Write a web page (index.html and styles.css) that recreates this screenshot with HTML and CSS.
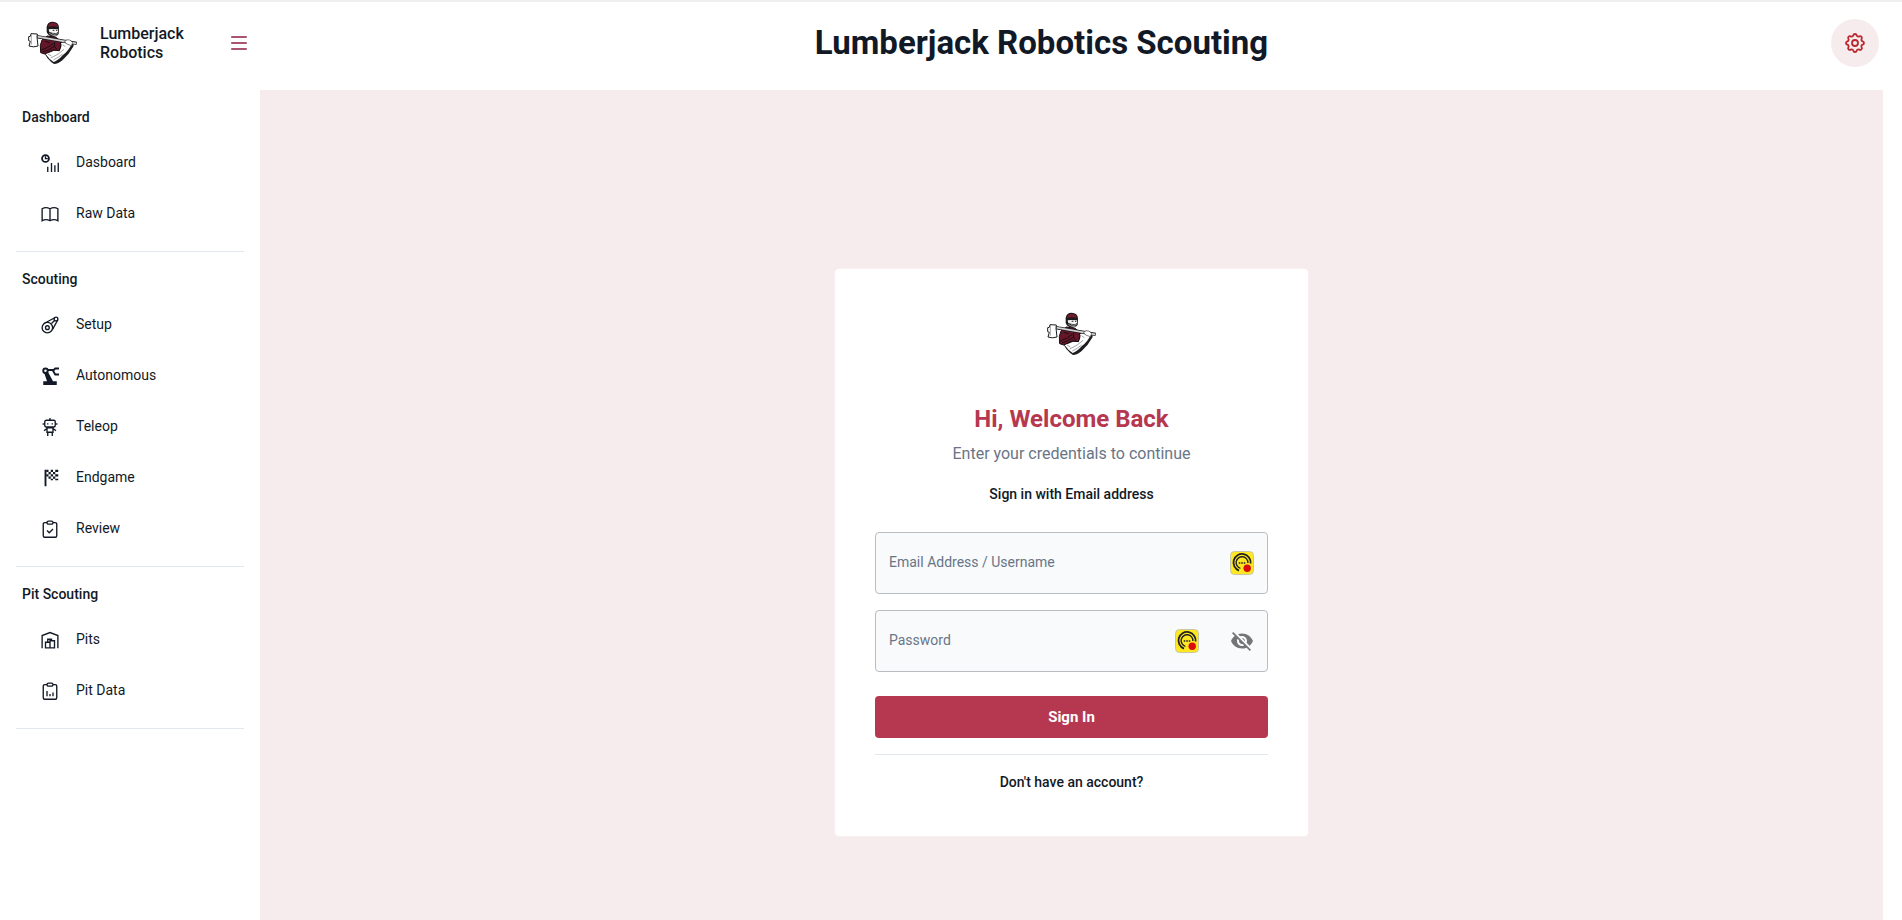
FILE: index.html
```html
<!DOCTYPE html>
<html lang="en">
<head>
    <meta charset="UTF-8">
    <meta name="viewport" content="width=device-width, initial-scale=1.0">
    <title>Lumberjack Robotics Scouting</title>
    <link rel="stylesheet" href="styles.css">
</head>
<body>
    <!-- Shared drawings -->
    <svg class="sprite" aria-hidden="true">
        <symbol id="logo" viewBox="0 0 150 130">
            <path d="M48 94 L58 110 Q68 122 78 128 Q90 128 104 116 Q124 98 137 74 L134 60 L118 55 L96 58 L80 80 Z" fill="#1d1d20"/>
            <path d="M52 97 Q66 94 78 88 L95 88 L100 76 L99 66 L108 60 L124 59 L131 68 Q122 88 104 102 Q90 118 77 122 Q64 114 52 97 Z" fill="#fff"/>
            <path d="M68 110 Q92 100 108 84 M76 116 Q92 108 104 98 M60 98 L70 104 M104 70 L112 76" fill="none" stroke="#77777a" stroke-width="2"/>
            <path d="M58 44 L42 56 L37 72 L38 94 L50 98 L76 86 L94 88 L99 70 L94 56 L84 48 Z" fill="#641729" stroke="#1b0d12" stroke-width="3"/>
            <path d="M40 86 Q60 80 76 66 M44 92 Q62 88 80 74 M80 62 Q76 76 86 84 M50 60 L66 64" fill="none" stroke="#1b0d12" stroke-width="3"/>
            <path d="M56 18 Q57 1 74 1 Q92 2 93 18 L92 38 Q86 47 76 47 Q60 44 56 32 Z" fill="#1b1a1c"/>
            <path d="M60 17 Q61 4 75 4 Q89 5 90 17 Q76 13 60 17 Z" fill="#711b2e"/>
            <path d="M62 24 L72 23 L90 24 L90 32 L84 36 L72 34 L64 32 Z" fill="#f3f3f3"/>
            <path d="M74 27h5M84 27h4" stroke="#222" stroke-width="3"/>
            <path d="M64 36 Q72 44 86 43 M72 37 Q80 40 89 37" fill="none" stroke="#a3a3a6" stroke-width="3"/>
            <path d="M26 46 L146 66" stroke="#1c1c1e" stroke-width="10"/>
            <path d="M28 46 L144 66" stroke="#d2d2d4" stroke-width="5"/>
            <path d="M9 37 L28 38 L27 48 L30 74 Q16 79 3 74 L7 60 L2 58 L2 46 L7 45 Z" fill="#fff" stroke="#1c1c1e" stroke-width="3"/>
            <path d="M10 40 L10 70" stroke="#777" stroke-width="2"/>
            <path d="M110 60 Q116 53 126 56 L134 64 L130 73 L116 68 Z" fill="#fff" stroke="#444" stroke-width="2"/>
        </symbol>
        <symbol id="vault" viewBox="0 0 24 24">
            <rect x="0.5" y="0.5" width="23" height="23" rx="4" fill="#ffe822" stroke="#c9c6a4"/>
            <path d="M9 19.6A8.6 8.6 0 1 1 20.6 12.5" fill="none" stroke="#222" stroke-width="1.8"/>
            <path d="M10.4 17.3A5.9 5.9 0 1 1 17.9 12" fill="none" stroke="#222" stroke-width="1.4"/>
            <path d="M8.7 12h1.6M11.2 12h1.6M13.7 12h1.6" stroke="#222" stroke-width="1.4"/>
            <circle cx="17.2" cy="17.2" r="3.7" fill="#d90b0b"/>
        </symbol>
    </svg>

    <header class="header">
        <div class="brand">
            <svg class="logo" role="img" aria-label="Lumberjack Robotics"><use href="#logo"/></svg>
            <span class="brand-name">Lumberjack Robotics</span>
            <button class="menu-button" type="button" aria-label="Menu">
                <svg class="icon" viewBox="0 0 24 24"><path d="M3.5 5.5h17M3.5 12h17M3.5 18.5h17"/></svg>
            </button>
        </div>
        <h1>Lumberjack Robotics Scouting</h1>
        <button class="settings-button" type="button" aria-label="Settings">
            <svg class="icon" viewBox="0 0 24 24">
                <path d="M10.325 4.317c.426-1.756 2.924-1.756 3.35 0a1.724 1.724 0 0 0 2.573 1.066c1.543-.94 3.31.826 2.37 2.37a1.724 1.724 0 0 0 1.065 2.572c1.756.426 1.756 2.924 0 3.35a1.724 1.724 0 0 0-1.066 2.573c.94 1.543-.826 3.31-2.37 2.37a1.724 1.724 0 0 0-2.572 1.065c-.426 1.756-2.924 1.756-3.35 0a1.724 1.724 0 0 0-2.573-1.066c-1.543.94-3.31-.826-2.37-2.37a1.724 1.724 0 0 0-1.065-2.572c-1.756-.426-1.756-2.924 0-3.35a1.724 1.724 0 0 0 1.066-2.573c-.94-1.543.826-3.31 2.37-2.37 1 .608 2.296.07 2.572-1.065z"/>
                <circle cx="12" cy="12" r="3"/>
            </svg>
        </button>
    </header>

    <div class="layout">
        <nav class="sidebar">
            <section class="nav-group">
                <h2>Dashboard</h2>
                <a href="#" class="nav-item">
                    <svg class="icon" viewBox="0 0 24 24"><circle cx="6" cy="6" r="4.6" stroke-width="2.4"/><path d="M6 3v3.2h3"/><path d="M9 17v7M14 12v12M18.500 15v9M23 11.500v12.500"/></svg>
                    <span>Dasboard</span>
                </a>
                <a href="#" class="nav-item">
                    <svg class="icon" viewBox="0 0 24 24"><path d="M1.500 21V5q5-3 10.500 0 5.500-3 10.500 0v16q-5-3-10.500 0-5.500-3-10.500 0zM12 5v16"/></svg>
                    <span>Raw Data</span>
                </a>
            </section>

            <section class="nav-group">
                <h2>Scouting</h2>
                <a href="#" class="nav-item">
                    <svg class="icon" viewBox="0 0 24 24"><circle cx="8.500" cy="15.500" r="7"/><circle cx="8.500" cy="15.500" r="2.500"/><circle cx="20" cy="4" r="2.500"/><path d="M4 10L19 2M15 18.500L22.500 5M14 10l4-4"/></svg>
                    <span>Setup</span>
                </a>
                <a href="#" class="nav-item">
                    <svg class="icon" viewBox="0 0 24 24"><path class="solid" d="M4 7l5-1 7 13h5v5H3v-5h5z"/><circle cx="6" cy="5" r="3" stroke-width="2.500"/><path d="M8 4h8M24 2h-5l-3 3 3 5h5" stroke-width="2.500"/></svg>
                    <span>Autonomous</span>
                </a>
                <a href="#" class="nav-item">
                    <svg class="icon" viewBox="0 0 24 24"><rect x="5" y="3" width="14" height="9" rx="2"/><path d="M12 0v3M9 7v1.500M15 7v1.500M8 13h8v6H8zM8 14l-4 3M16 14l4 3M9 19v5M15 19v5M3 7v2M21 7v2"/></svg>
                    <span>Teleop</span>
                </a>
                <a href="#" class="nav-item">
                    <svg class="icon" viewBox="0 0 24 24"><path d="M6 1v22" stroke-width="2.500"/><path class="solid" d="M7 1h3v3H7zM13 1h3v3h-3zM19 1h4v3h-4zM10 4h3v3h-3zM16 4h3v3h-3zM7 7h3v3H7zM13 7h3v3h-3zM19 7h4v3h-4zM10 10h3v3h-3zM16 10h3v3h-3zM13 13h3v2h-3zM19 13h4v2h-4z"/></svg>
                    <span>Endgame</span>
                </a>
                <a href="#" class="nav-item">
                    <svg class="icon" viewBox="0 0 24 24"><path d="M8 3.500H5q-2 0-2 2V21q0 2 2 2h14q2 0 2-2V5.500q0-2-2-2h-3"/><rect x="8" y="1.500" width="8" height="4" rx="2"/><path d="M8 14l3 3 5-5"/></svg>
                    <span>Review</span>
                </a>
            </section>

            <section class="nav-group">
                <h2>Pit Scouting</h2>
                <a href="#" class="nav-item">
                    <svg class="icon" viewBox="0 0 24 24"><path d="M1.500 23V6L12 2l10.500 4v17M6 22.500V15h6v7.500zM12 22.500V13h6v9.500zM9 15v-4h5v2M6 22.500h12"/></svg>
                    <span>Pits</span>
                </a>
                <a href="#" class="nav-item">
                    <svg class="icon" viewBox="0 0 24 24"><path d="M8 3.500H5q-2 0-2 2V21q0 2 2 2h14q2 0 2-2V5.500q0-2-2-2h-3"/><rect x="8" y="1.500" width="8" height="4" rx="2"/><path d="M8 12v7M12 16v3M16 14v5"/></svg>
                    <span>Pit Data</span>
                </a>
            </section>
        </nav>

        <main class="content">
            <form class="card">
                <svg class="logo" role="img" aria-label="Lumberjack Robotics"><use href="#logo"/></svg>
                <h2>Hi, Welcome Back</h2>
                <p class="caption">Enter your credentials to continue</p>
                <p class="subtitle">Sign in with Email address</p>

                <div class="field">
                    <input type="email" id="email">
                    <label for="email">Email Address / Username</label>
                    <svg class="vault" aria-hidden="true"><use href="#vault"/></svg>
                </div>
                <div class="field">
                    <input type="password" id="password">
                    <label for="password">Password</label>
                    <svg class="vault" aria-hidden="true"><use href="#vault"/></svg>
                    <button class="eye-button" type="button" aria-label="Toggle password visibility">
                        <svg viewBox="0 0 24 24"><path d="M12 7c2.760 0 5 2.240 5 5 0 .650-.130 1.260-.360 1.830l2.920 2.920c1.510-1.260 2.700-2.890 3.430-4.750-1.730-4.390-6-7.500-11-7.500-1.400 0-2.740.250-3.980.700l2.160 2.160C10.740 7.130 11.350 7 12 7zM2 4.270l2.280 2.280.460.460C3.080 8.300 1.780 10.020 1 12c1.730 4.390 6 7.500 11 7.500 1.550 0 3.030-.300 4.380-.840l.420.420L19.730 22 21 20.730 3.270 3 2 4.270zM7.530 9.800l1.550 1.550c-.050.210-.080.430-.080.650 0 1.660 1.340 3 3 3 .220 0 .440-.030.650-.080l1.550 1.550c-.670.330-1.410.530-2.200.530-2.760 0-5-2.240-5-5 0-.790.200-1.530.530-2.200zm4.310-.780l3.150 3.150.020-.160c0-1.660-1.340-3-3-3l-.170.010z"/></svg>
                    </button>
                </div>

                <button class="submit-button" type="submit">Sign In</button>
                <hr>
                <a href="#" class="register">Don't have an account?</a>
            </form>
        </main>
    </div>
</body>
</html>
```

FILE: styles.css
```css
* {
    box-sizing: border-box;
}

body {
    margin: 0;
    min-height: 100vh;
    display: flex;
    flex-direction: column;
    border-top: 2px solid #f0f0f0;
    background-color: #fff;
    color: #121926;
    font-family: Roboto, "Liberation Sans", sans-serif;
    font-size: 14px;
    line-height: 20px;
}

h1, h2, p {
    margin: 0;
}

a {
    color: inherit;
    text-decoration: none;
}

button {
    padding: 0;
    border: none;
    background: none;
    font-family: inherit;
    cursor: pointer;
}

.sprite {
    display: none;
}

.icon {
    width: 18px;
    height: 18px;
    flex-shrink: 0;
    fill: none;
    stroke: currentColor;
    stroke-width: 1.8;
}

.icon .solid {
    fill: currentColor;
    stroke: none;
}

.logo {
    width: 50px;
    height: 50px;
    flex-shrink: 0;
}

/* Header */
.header {
    display: flex;
    align-items: center;
    height: 88px;
    padding: 0 23px 6px 28px;
}

.brand {
    display: flex;
    align-items: center;
    width: 224px;
}

.brand-name {
    width: 100px;
    margin: 0 auto 0 22px;
    font-size: 16px;
    font-weight: 500;
    line-height: 19px;
}

.menu-button {
    display: flex;
    margin-right: 2px;
    color: #8f1d3f;
}

.menu-button .icon {
    width: 22px;
    height: 22px;
}

.header h1 {
    flex: 1;
    font-size: 33px;
    font-weight: 700;
    line-height: 40px;
    text-align: center;
}

.settings-button {
    display: flex;
    align-items: center;
    justify-content: center;
    width: 48px;
    height: 48px;
    border-radius: 50%;
    background-color: #f6eced;
    color: #b9282d;
}

.settings-button .icon {
    width: 24px;
    height: 24px;
}

/* Sidebar */
.layout {
    flex: 1;
    display: flex;
}

.sidebar {
    width: 260px;
    padding: 0 16px;
}

.nav-group {
    padding: 17px 0 10px;
    border-bottom: 1px solid #e3e8ef;
}

.nav-group h2 {
    margin-bottom: 12px;
    padding-left: 6px;
    font-size: 14px;
    font-weight: 500;
}

.nav-item {
    display: flex;
    align-items: center;
    gap: 17px;
    height: 47px;
    margin-bottom: 4px;
    padding-left: 25px;
}

.nav-item span {
    padding-bottom: 2px;
}

/* Login card */
.content {
    flex: 1;
    display: flex;
    justify-content: center;
    align-items: flex-start;
    margin-right: 19px;
    padding: 178px 24px 80px;
    background-color: #f6eced;
}

.card {
    display: flex;
    flex-direction: column;
    width: 100%;
    max-width: 475px;
    padding: 40px 40px 44px;
    border: 1px solid #f7eff0;
    border-radius: 4px;
    background-color: #fff;
    background-clip: padding-box;
    text-align: center;
}

.card .logo {
    align-self: center;
}

.card h2 {
    margin-top: 46px;
    color: #b63850;
    font-size: 24px;
    font-weight: 700;
    line-height: 28px;
}

.caption {
    margin-top: 9px;
    color: #697586;
    font-size: 16px;
    line-height: 24px;
}

.subtitle {
    margin: 18px 0 28px;
    font-weight: 500;
}

.field {
    position: relative;
    display: flex;
    align-items: center;
    gap: 31px;
    height: 62px;
    margin-bottom: 16px;
    padding: 0 13px;
    border: 1px solid #b9bdc2;
    border-radius: 4px;
    background-color: #f8fafc;
}

.field input {
    flex: 1;
    min-width: 0;
    height: 100%;
    padding: 0;
    border: none;
    outline: none;
    background: none;
    font: inherit;
}

.field label {
    position: absolute;
    left: 13px;
    top: 19px;
    color: #697586;
    pointer-events: none;
}

.field input:focus + label {
    top: 4px;
    font-size: 11px;
}

.vault {
    width: 24px;
    height: 24px;
}

.eye-button {
    display: flex;
}

.eye-button svg {
    width: 24px;
    height: 24px;
    fill: #757575;
}

.submit-button {
    height: 42px;
    margin-top: 8px;
    border-radius: 4px;
    background-color: #b63850;
    color: #fff;
    font-size: 15px;
    font-weight: 700;
}

.card hr {
    width: 100%;
    margin: 16px 0 17px;
    border: none;
    border-top: 1px solid #e3e8ef;
}

.register {
    font-weight: 500;
}
```
